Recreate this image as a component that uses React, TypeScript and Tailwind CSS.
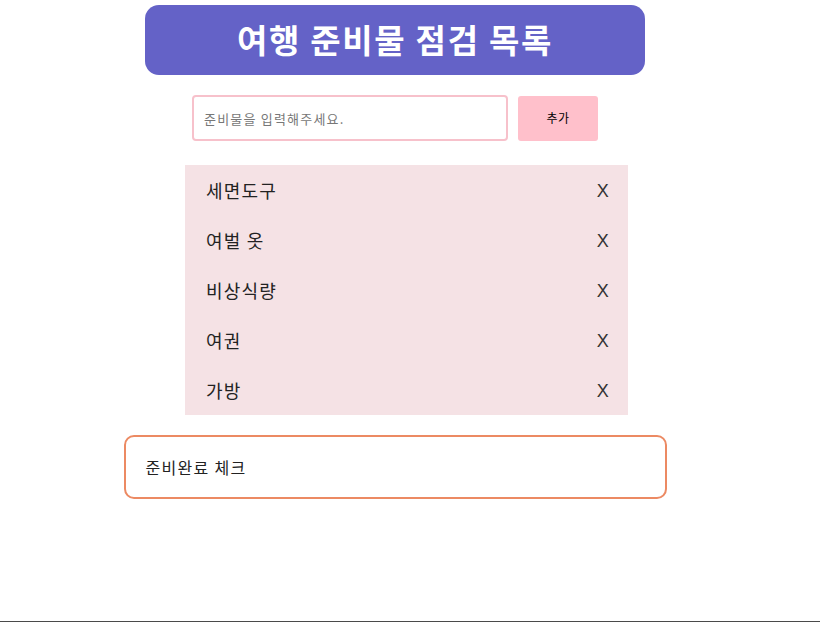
import { useState } from "react";

const initialItems = ["세면도구", "여벌 옷", "비상식량", "여권", "가방"];

export default function App() {
  const [items, setItems] = useState(initialItems);
  const [text, setText] = useState("");

  const addItem = () => {
    if (!text.trim()) return;
    setItems([...items, text.trim()]);
    setText("");
  };

  return (
    <div className="h-[622px] w-full border-b border-[#4a4a4a] bg-white font-['Noto_Sans_CJK_KR',sans-serif] text-[#222]">
      <div className="flex w-[790px] flex-col items-center pt-[5px]">
        <h1 className="flex h-[70px] w-[500px] items-center justify-center rounded-[14px] bg-[#6462c7] text-[33px] font-bold tracking-[1.7px] text-white">
          여행 준비물 점검 목록
        </h1>

        <div className="mt-[20px] flex items-center gap-[10px]">
          <input
            value={text}
            onChange={(e) => setText(e.target.value)}
            placeholder="준비물을 입력해주세요."
            className="h-[46px] w-[316px] rounded-[4px] border-2 border-[#f7c1cb] px-[10px] text-[13px] tracking-[1.2px] outline-none placeholder:text-[#777]"
          />
          <button
            onClick={addItem}
            className="h-[45px] w-[80px] rounded-[3px] bg-[#ffc0cb] text-[12px] tracking-[0.5px] text-black"
          >
            추가
          </button>
        </div>

        <ul className="mt-[24px] ml-[23px] w-[443px] bg-[#f5e2e5]">
          {items.map((item, i) => (
            <li key={i} className="flex h-[50px] items-center justify-between pl-[21px] pr-[18px] text-[18px] tracking-[1.2px]">
              <span>{item}</span>
              <button
                onClick={() => setItems(items.filter((_, j) => j !== i))}
                className="pt-[3px] font-['Liberation_Sans',sans-serif] text-[18px] text-[#333]"
              >
                X
              </button>
            </li>
          ))}
        </ul>

        <div className="mt-[20px] flex h-[64px] w-[543px] items-center rounded-[10px] border-2 border-[#ec8a63] px-[20px] text-[16px] tracking-[1.3px]">
          준비완료 체크
        </div>
      </div>
    </div>
  );
}
